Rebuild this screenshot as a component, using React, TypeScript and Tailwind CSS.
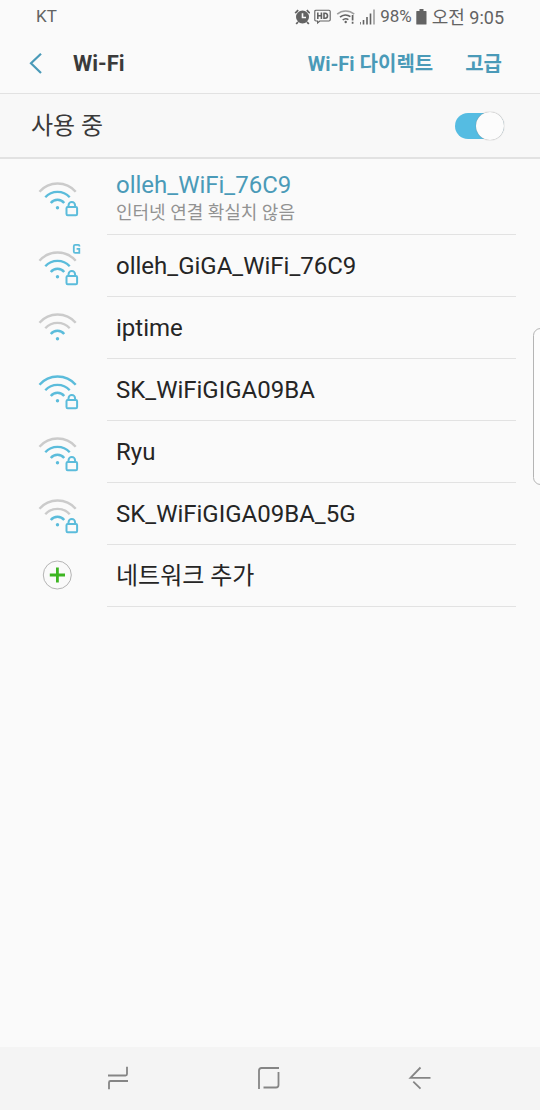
import React, { useState } from 'react';

type Network = {
  ssid: string;
  level: 1 | 2 | 3;
  locked: boolean;
  giga?: boolean;
  status?: string;
};

const networks: Network[] = [
  { ssid: 'olleh_WiFi_76C9', level: 2, locked: true, status: '인터넷 연결 확실치 않음' },
  { ssid: 'olleh_GiGA_WiFi_76C9', level: 2, locked: true, giga: true },
  { ssid: 'iptime', level: 1, locked: false },
  { ssid: 'SK_WiFiGIGA09BA', level: 3, locked: true },
  { ssid: 'Ryu', level: 2, locked: true },
  { ssid: 'SK_WiFiGIGA09BA_5G', level: 1, locked: true },
];

const ON = '#5bbcdb';
const OFF = '#cbcbcb';

const WifiIcon = ({ level, locked, giga }: Pick<Network, 'level' | 'locked' | 'giga'>) => (
  <svg className="h-12 w-12 shrink-0" viewBox="0 0 48 48" fill="none" strokeWidth="2.4" aria-hidden="true">
    <path d="M5.5 18.8A24 24 0 0 1 41.7 18.8" stroke={level >= 3 ? ON : OFF} />
    <path d="M11.3 24.3A16.5 16.5 0 0 1 35.7 24.3" stroke={level >= 2 ? ON : OFF} />
    <path d="M16.8 30A8.5 8.5 0 0 1 30.2 30" stroke={ON} />
    <circle cx="23.5" cy="34.8" r="1.7" fill={ON} />
    {locked && (
      <g stroke={ON} strokeWidth="2">
        <rect x="32.5" y="34.1" width="10.6" height="8.2" rx="1.2" />
        <path d="M34.5 34V32.4a3.3 3.3 0 0 1 6.6 0V34" />
      </g>
    )}
    {giga && <path d="M45.4 4.6V3.7Q45.4 2.9 44.4 2.9H41.2Q39.8 2.9 39.8 4.3V9.5Q39.8 10.9 41.2 10.9H45.3V6.9H42.6" stroke={ON} strokeWidth="1.8" />}
  </svg>
);

const StatusBar = () => (
  <div className="flex h-[34px] items-center justify-between pl-9 pr-9 text-[#636363]">
    <span className="text-[17px]">KT</span>
    <div className="flex items-center gap-1">
      {/* Alarm */}
      <svg className="h-4 w-4" viewBox="0 0 16 16" fill="none" aria-hidden="true">
        <circle cx="8.5" cy="8" r="6.5" fill="#636363" />
        <path d="M1.2 4.2L4.2 1.2M12.8 1.2l3 3M4 13l-1.8 2M13 13l1.8 2" stroke="#636363" strokeWidth="1.8" />
        <path d="M8.5 4.2V8.5H12" stroke="#fafafa" strokeWidth="1.6" />
      </svg>
      {/* HD voice */}
      <svg className="h-4 w-[18px]" viewBox="0 0 18 16" fill="none" stroke="#636363" aria-hidden="true">
        <path d="M2 1.2H15Q16.2 1.2 16.2 2.4V10.8Q16.2 12 15 12H5.8L3.6 14V12H2Q.8 12 .8 10.8V2.4Q.8 1.2 2 1.2Z" strokeWidth="1.1" />
        <path d="M3.8 3.5V10M7.4 3.5V10M3.8 6.8H7.4M10 4.2V9.3H11.2Q13.5 9.3 13.5 6.8T11.2 4.2Z" strokeWidth="1.6" />
      </svg>
      {/* Wi-Fi without internet */}
      <svg className="h-4 w-5" viewBox="0 0 20 16" fill="none" stroke="#636363" strokeWidth="1.6" aria-hidden="true">
        <path d="M1.2 5.2A12.8 12.8 0 0 1 18.2 5.2" opacity=".6" />
        <path d="M4 8.2A8.5 8.5 0 0 1 14.4 7.6M6.7 11A4.7 4.7 0 0 1 12.4 10.6" />
        <circle cx="9.7" cy="13" r="1.2" fill="#636363" stroke="none" />
        <path d="M16.6 6V11.4M16.6 12.8V14.8" strokeWidth="1.7" />
      </svg>
      {/* Mobile signal */}
      <svg className="h-4 w-4" viewBox="0 0 16 16" stroke="#636363" strokeWidth="1.6" aria-hidden="true">
        <path d="M0 13V15.5M3.5 11V15.5M7 8V15.5M10.5 4.5V15.5" />
        <path d="M14 .5V15.5" opacity=".6" />
      </svg>
      <span className="text-[17px]">98%</span>
      <svg className="h-4 w-3" viewBox="0 0 12 16" fill="#636363" aria-hidden="true">
        <path d="M3.5 0H7.5V2H10Q10.5 2 10.5 2.5V15Q10.5 15.5 10 15.5H.8Q.3 15.5 .3 15V2.5Q.3 2 .8 2H3.5Z" />
      </svg>
      <span className="text-[18px]">오전 9:05</span>
    </div>
  </div>
);

const App = () => {
  const [enabled, setEnabled] = useState(true);

  return (
    <div className="relative flex min-h-screen flex-col overflow-hidden bg-[#fafafa] font-['Roboto','Noto_Sans_CJK_KR',sans-serif] text-[#252525]">
      <StatusBar />

      <header className="flex h-[60px] items-center border-b border-[#e2e2e2] pl-7 pr-[38px]">
        <button type="button" aria-label="뒤로" className="mr-[27px]">
          <svg className="h-6 w-[18px]" viewBox="0 0 18 24" fill="none" stroke="#4a9ab8" strokeWidth="2.2" aria-hidden="true">
            <path d="M13 1.7L3 11.3L13 21" />
          </svg>
        </button>
        <h1 className="grow text-[22px] font-bold text-[#3a3a3a]">Wi-Fi</h1>
        <nav className="flex gap-8 text-xl font-bold text-[#4a9ab8]">
          <button type="button">Wi-Fi 다이렉트</button>
          <button type="button">고급</button>
        </nav>
      </header>

      <label className="flex h-[65px] items-center justify-between border-b-2 border-[#e2e2e2] bg-[#f8f8f8] pl-[31px] pr-9 text-2xl text-[#3a3a3a]">
        사용 중
        <input
          type="checkbox"
          role="switch"
          checked={enabled}
          onChange={(e) => setEnabled(e.target.checked)}
          className="flex h-[26px] w-[49px] appearance-none items-center rounded-full bg-[#c8c8c8] before:size-7 before:shrink-0 before:rounded-full before:bg-[#fcfcfc] before:shadow-[0_0_1px_#777] checked:justify-end checked:bg-[#55bce2]"
        />
      </label>

      <main className="grow">
        <ul>
          {networks.map((network) => (
            <li key={network.ssid}>
              <button type="button" className="flex w-full items-stretch pl-[34px] pr-6 text-left">
                <span className="flex w-[73px] shrink-0 items-center">
                  <WifiIcon level={network.level} locked={network.locked} giga={network.giga} />
                </span>
                {network.status ? (
                  <span className="flex h-[76px] grow flex-col justify-center border-b border-[#e2e2e2] pl-[9px]">
                    <span className="text-2xl leading-8 text-[#4a9ab8]">{network.ssid}</span>
                    <span className="text-lg leading-6 text-[#929292]">{network.status}</span>
                  </span>
                ) : (
                  <span className="flex h-[62px] grow items-center border-b border-[#e2e2e2] pl-[9px] text-2xl">
                    {network.ssid}
                  </span>
                )}
              </button>
            </li>
          ))}
          <li>
            <button type="button" className="flex w-full items-stretch pl-[34px] pr-6 text-left">
              <span className="flex w-[73px] shrink-0 items-center">
                <svg className="h-12 w-12" viewBox="0 0 48 48" fill="none" aria-hidden="true">
                  <circle cx="23.3" cy="23" r="14" stroke="#b4b4b4" />
                  <path d="M15.8 23H31M23.4 15.5V30.5" stroke="#3cb521" strokeWidth="2.8" />
                </svg>
              </span>
              <span className="flex h-[62px] grow items-center border-b border-[#e2e2e2] pl-[9px] text-2xl">
                네트워크 추가
              </span>
            </button>
          </li>
        </ul>
      </main>

      {/* Edge panel handle */}
      <div className="absolute -right-2 top-[328px] h-[157px] w-[15px] rounded-lg border border-[#b4b4b4] bg-[#fcfcfc]" />

      <footer className="flex h-[63px] items-center justify-center gap-[127px] bg-[#f4f4f4] pb-0.5 pr-0.5">
        <button type="button" aria-label="최근 실행 앱">
          <svg className="size-6" viewBox="0 0 24 24" fill="none" stroke="#858585" strokeWidth="1.8" aria-hidden="true">
            <path d="M2 9.5H19.5Q21 9.5 21 8V.8M3 23.2V16.5Q3 15 4.5 15H22" />
          </svg>
        </button>
        <button type="button" aria-label="홈">
          <svg className="size-6" viewBox="0 0 24 24" fill="none" stroke="#858585" strokeWidth="1.8" aria-hidden="true">
            <path d="M2 23V4.5Q2 2 4.5 2H22M21.5 6V19Q21.5 21.5 19 21.5H6.5" />
          </svg>
        </button>
        <button type="button" aria-label="이전">
          <svg className="size-6" viewBox="0 0 24 24" fill="none" stroke="#858585" strokeWidth="1.8" aria-hidden="true">
            <path d="M12.5 1.5L2.5 11.8H22.5M5.3 15.6L12.5 22.6" />
          </svg>
        </button>
      </footer>
    </div>
  );
};

export default App;
